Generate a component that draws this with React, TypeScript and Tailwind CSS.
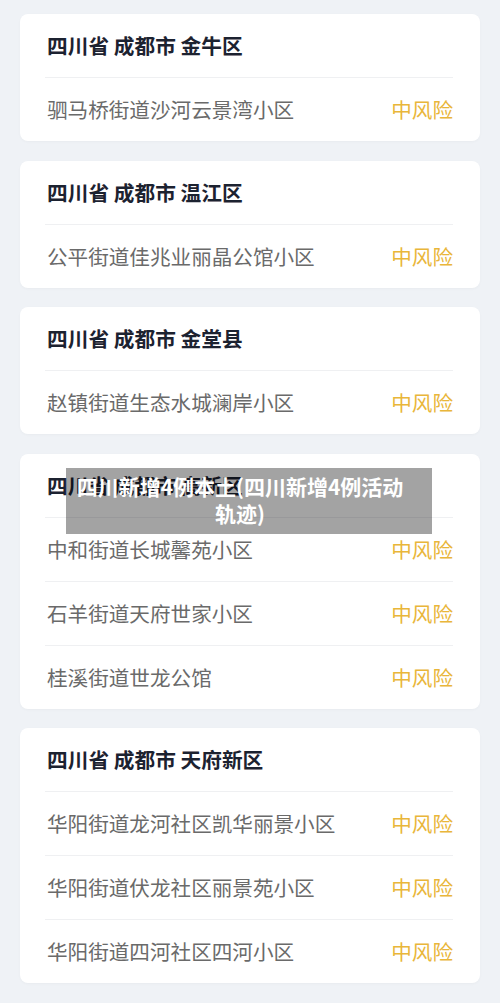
import React from "react";

type Group = { title: string; rows: string[] };

const groups: Group[] = [
  { title: "四川省 成都市 金牛区", rows: ["驷马桥街道沙河云景湾小区"] },
  { title: "四川省 成都市 温江区", rows: ["公平街道佳兆业丽晶公馆小区"] },
  { title: "四川省 成都市 金堂县", rows: ["赵镇街道生态水城澜岸小区"] },
  {
    title: "四川省 成都市 高新区",
    rows: ["中和街道长城馨苑小区", "石羊街道天府世家小区", "桂溪街道世龙公馆"],
  },
  {
    title: "四川省 成都市 天府新区",
    rows: ["华阳街道龙河社区凯华丽景小区", "华阳街道伏龙社区丽景苑小区", "华阳街道四河社区四河小区"],
  },
];

export default function App() {
  return (
    <div
      className="relative w-[500px] h-[1003px] overflow-hidden bg-[#eff2f6]"
      style={{ fontFamily: '"Noto Sans CJK SC", "Noto Sans", sans-serif' }}
    >
      <div className="flex flex-col gap-[19.5px] pt-[14px] px-[20px]">
        {groups.map((g) => (
          <div key={g.title} className="bg-white rounded-[8px] pl-[25px] pr-[27px] shadow-[0_1px_3px_rgba(0,0,0,0.03)]">
            <div className="h-[63px] flex items-center pl-[2px] text-[20.7px] font-bold text-[#1c2230] leading-none">
              {g.title}
            </div>
            {g.rows.map((r) => (
              <div
                key={r}
                className="h-[64px] border-t border-[#eff0f2] flex items-center justify-between text-[20.6px] leading-none"
              >
                <span className="pl-[2px] text-[#6a6a6a]">{r}</span>
                <span className="text-[#e9b63a]">中风险</span>
              </div>
            ))}
          </div>
        ))}
      </div>
      <div className="absolute left-[66px] top-[468px] w-[366px] h-[66px] bg-[rgba(0,0,0,0.36)] flex items-center justify-center pl-[2px] pr-[20px] pb-[3px]">
        <p className="text-white font-bold text-[21px] leading-[27px] text-center">
          四川新增4例本土(四川新增4例活动轨迹)
        </p>
      </div>
    </div>
  );
}
